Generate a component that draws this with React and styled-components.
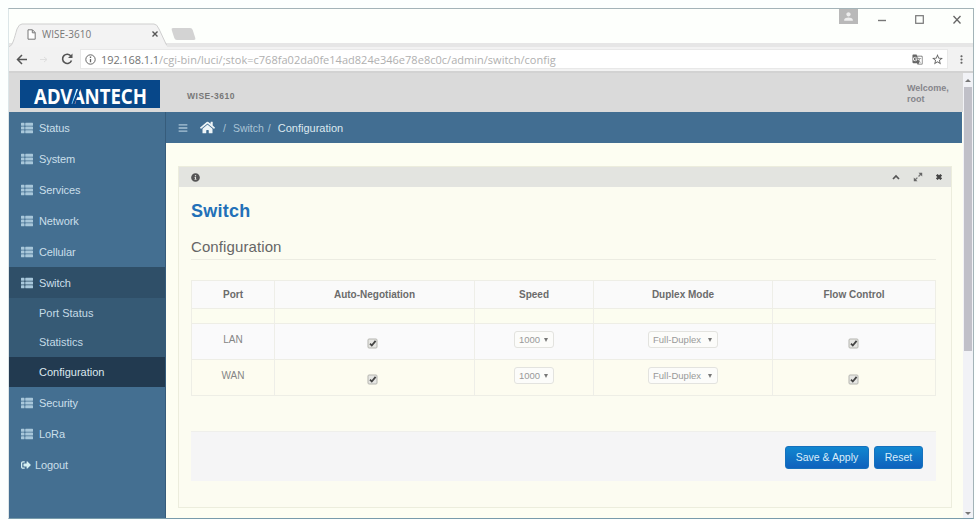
import React from 'react';
import styled, { createGlobalStyle } from 'styled-components';
import { FaHome, FaThList, FaBars, FaInfoCircle, FaSignOutAlt } from 'react-icons/fa';
import { MdGTranslate, MdStarBorder, MdMoreVert, MdPerson } from 'react-icons/md';

const menu = [
    { label: 'Status' },
    { label: 'System' },
    { label: 'Services' },
    { label: 'Network' },
    { label: 'Cellular' },
    { label: 'Switch', open: true, items: ['Port Status', 'Statistics', 'Configuration'] },
    { label: 'Security' },
    { label: 'LoRa' },
];

const columns = ['Port', 'Auto-Negotiation', 'Speed', 'Duplex Mode', 'Flow Control'];
const ports = ['LAN', 'WAN'];

const Check = () => (
    <CheckBox viewBox="0 0 11 11">
        <rect x="1" y="1" width="9" height="9" rx="1" fill="#e6e6e3" stroke="#b5b5b0" />
        <path d="M3 5.6 L4.8 7.5 L8.6 2.9" fill="none" stroke="#444" strokeWidth="1.8" />
    </CheckBox>
);

const Logo = () => (
    <LogoBox viewBox="0 0 140 28">
        <rect width="140" height="28" fill="#074789" />
        <text x="14" y="24" textLength="113" lengthAdjust="spacingAndGlyphs">ADVANTECH</text>
        <path d="M53.2 24.5 L60 7" stroke="#074789" strokeWidth="2.2" fill="none" />
    </LogoBox>
);

const Browser = () => (
    <>
        <TabStrip>
            <Tab>
                <svg className="shape" width="158" height="24" viewBox="0 0 158 24">
                    <path d="M0 24 C4 22 5 16 8 6 Q10 1 13 1 H145 Q148 1 150 6 L157 21 Q158 23 160 24" fill="#f3f3f3" stroke="#cfcfcf" />
                </svg>
                <svg className="page" width="9" height="11" viewBox="0 0 9 11">
                    <path d="M1 .8 H5.5 L8.2 3.5 V10.2 H1 Z M5.3 1 V3.8 H8" fill="#fff" stroke="#777" />
                </svg>
                <span>WISE-3610</span>
                <svg className="close" width="6" height="6" viewBox="0 0 6 6">
                    <path d="M.5 .5 L5.5 5.5 M5.5 .5 L.5 5.5" stroke="#555" strokeWidth="1.4" />
                </svg>
            </Tab>
            <NewTab />
            <WindowButtons>
                <User><MdPerson /></User>
                <svg width="8" height="20" viewBox="0 0 8 20"><path d="M0 11.5 H8" stroke="#777" strokeWidth="1.4" /></svg>
                <svg width="9" height="20" viewBox="0 0 9 20"><rect x=".7" y="6.7" width="7.6" height="7.6" fill="none" stroke="#777" strokeWidth="1.2" /></svg>
                <svg width="8" height="20" viewBox="0 0 8 20"><path d="M.5 7 L7.5 14.5 M7.5 7 L.5 14.5" stroke="#666" strokeWidth="1.3" /></svg>
            </WindowButtons>
        </TabStrip>
        <Toolbar>
            <svg width="12" height="11" viewBox="0 0 12 11"><path d="M11 5.5 H1.5 M6 1 L1.5 5.5 L6 10" stroke="#555" strokeWidth="1.5" fill="none" /></svg>
            <svg width="9" height="11" viewBox="0 0 9 11"><path d="M0 5.5 H7 M4 3 L7 5.5 L4 8" stroke="#dedede" fill="none" /></svg>
            <svg width="12" height="12" viewBox="0 0 12 12"><path d="M10 3.2 A4.6 4.6 0 1 0 10.5 7.5" stroke="#555" strokeWidth="1.6" fill="none" /><path d="M11.5 .5 V5 H7 Z" fill="#555" /></svg>
            <Address>
                <svg width="11" height="11" viewBox="0 0 11 11"><circle cx="5.5" cy="5.5" r="4.7" fill="none" stroke="#666" /><path d="M5.5 5 V8.3 M5.5 2.6 V4" stroke="#666" strokeWidth="1.3" /></svg>
                <Url><b>192.168.1.1</b>/cgi-bin/luci/;stok=c768fa02da0fe14ad824e346e78e8c0c/admin/switch/config</Url>
                <MdGTranslate size={11} />
                <MdStarBorder size={13} />
            </Address>
            <MdMoreVert className="more" size={13} />
        </Toolbar>
    </>
);

const Sidebar = () => (
    <SidebarStyled>
        {menu.map(({ label, open, items }) => (
            <React.Fragment key={label}>
                <MenuItem $open={open}><FaThList />{label}</MenuItem>
                {items && items.map((item) => (
                    <SubItem key={item} $active={item === 'Configuration'}>{item}</SubItem>
                ))}
            </React.Fragment>
        ))}
        <MenuItem $logout><FaSignOutAlt />Logout</MenuItem>
    </SidebarStyled>
);

const SwitchPanel = () => (
    <Panel>
        <PanelHeader>
            <FaInfoCircle size={9} />
            <svg width="8" height="8" viewBox="0 0 8 8"><path d="M1 6 L4 3 L7 6" stroke="#555" strokeWidth="1.7" fill="none" /></svg>
            <svg width="10" height="10" viewBox="0 0 10 10"><path d="M2 8 L8 2" stroke="#777" strokeWidth="1.3" strokeDasharray="3.4 1.6" /><path d="M5.5 .8 H9.2 V4.5 Z M.8 5.5 V9.2 H4.5 Z" fill="#666" /></svg>
            <svg width="6" height="6" viewBox="0 0 6 6"><path d="M.8 .8 L5.2 5.2 M5.2 .8 L.8 5.2" stroke="#444" strokeWidth="2.3" /></svg>
        </PanelHeader>
        <PanelBody>
            <Title>Switch</Title>
            <Legend>Configuration</Legend>
            <Table>
                <TableRow $kind="head">
                    {columns.map((name) => <Cell key={name}>{name}</Cell>)}
                </TableRow>
                <TableRow $kind="gap">
                    {columns.map((name) => <Cell key={name} />)}
                </TableRow>
                {ports.map((port) => (
                    <TableRow key={port} $kind={port === 'LAN' ? 'odd' : 'even'}>
                        <Cell>{port}</Cell>
                        <Cell $low><Check /></Cell>
                        <Cell><Select $width={40}>1000<i /></Select></Cell>
                        <Cell><Select $width={70}>Full-Duplex<i /></Select></Cell>
                        <Cell $low><Check /></Cell>
                    </TableRow>
                ))}
            </Table>
            <Actions>
                <Button $width={84}>Save &amp; Apply</Button>
                <Button $width={49}>Reset</Button>
            </Actions>
        </PanelBody>
    </Panel>
);

const App = () => (
    <>
        <GlobalStyle />
        <Window>
            <Browser />
            <Viewport>
                <Page>
                    <PageHeader>
                        <Logo />
                        <Model>WISE-3610</Model>
                        <Welcome>Welcome,<br />root</Welcome>
                    </PageHeader>
                    <Main>
                        <Sidebar />
                        <Content>
                            <Breadcrumb>
                                <FaBars size={10} />
                                <FaHome className="home" size={15} />
                                <span>/</span>
                                <span className="parent">Switch</span>
                                <span>/</span>
                                <strong>Configuration</strong>
                            </Breadcrumb>
                            <SwitchPanel />
                        </Content>
                    </Main>
                </Page>
                <Scrollbar>
                    <Arrow $up />
                    <Thumb />
                    <Arrow />
                </Scrollbar>
            </Viewport>
        </Window>
    </>
);

const GlobalStyle = createGlobalStyle`
    *{
        box-sizing:border-box;
    }

    body{
        margin:0;
        background:#fcfffe;
        font-family:"Liberation Sans", Arial, sans-serif;
    }

    svg{
        display:block;
        flex-shrink:0;
    }
`;

const Window = styled.div`
    display:flex;
    flex-direction:column;
    width:966px;
    height:511px;
    margin:8px 0 0 8px;
    border:1px solid #a3b3b8;
    border-left-color:#dce6e8;
    border-bottom-color:#789bab;
    background:#fdfffc;
`;

const TabStrip = styled.div`
    display:flex;
    height:38px;
    padding-top:14px;
    border-bottom:4px solid #e6e6e6;
`;

const Tab = styled.div`
    position:relative;
    display:flex;
    align-items:center;
    width:158px;
    height:22px;
    padding-left:18px;
    color:#777;
    font-family:"Open Sans", sans-serif;
    font-size:10px;

    .shape{
        position:absolute;
        left:0;
        top:0;
    }

    .page, span, .close{
        position:relative;
    }

    span{
        width:101px;
        margin-left:6px;
    }

    .close{
        margin-left:9px;
    }
`;

const NewTab = styled.div`
    width:21px;
    height:12px;
    margin:5px 0 0 6px;
    border-radius:2px;
    background:#d3d3d3;
    transform:skewX(18deg);
`;

const WindowButtons = styled.div`
    display:flex;
    gap:29px;
    margin:-14px 12px 0 auto;
`;

const User = styled.div`
    display:flex;
    align-items:center;
    justify-content:center;
    width:19px;
    height:15px;
    margin-right:-9px;
    background:#b9b9b9;
    color:#eee;
    font-size:13px;
`;

const Toolbar = styled.div`
    display:flex;
    align-items:center;
    height:26px;
    padding:0 5px 0 7px;
    background:#f2f2f2;
    border-bottom:2px solid #d2d2d2;
    gap:12px;
    color:#666;

    .more{
        margin-left:-5px;
    }
`;

const Address = styled.div`
    display:flex;
    flex:1;
    align-items:center;
    gap:8px;
    height:20px;
    margin-left:-5px;
    padding:0 3px 0 4px;
    background:#fff;
    border:1px solid #e8e8e8;
`;

const Url = styled.div`
    flex:1;
    margin-left:-3px;
    color:#b0b0b0;
    font-family:"Open Sans", sans-serif;
    font-size:11px;
    letter-spacing:0.02px;
    white-space:nowrap;

    b{
        color:#737373;
        font-weight:400;
        letter-spacing:-0.1px;
    }
`;

const Viewport = styled.div`
    display:flex;
    flex:1;
    min-height:0;
`;

const Page = styled.div`
    display:flex;
    flex-direction:column;
    width:954px;
`;

const PageHeader = styled.div`
    display:flex;
    height:39px;
    padding:7px 8px 0 11px;
    background:#dadada;
`;

const LogoBox = styled.svg`
    width:140px;
    height:28px;
    overflow:visible;

    text{
        fill:#fff;
        font-family:"Noto Sans", sans-serif;
        font-size:21.5px;
        font-weight:700;
    }
`;

const Model = styled.div`
    margin:11px 0 0 27px;
    color:#777;
    font-size:8.5px;
    font-weight:700;
    letter-spacing:0.5px;
`;

const Welcome = styled.div`
    width:48px;
    margin:3px 0 0 auto;
    color:#85858b;
    font-size:9px;
    font-weight:700;
    line-height:10.5px;
`;

const Main = styled.div`
    display:flex;
    flex:1;
`;

const SidebarStyled = styled.div`
    width:157px;
    background:#446f91;
    border-right:1px solid #365c7b;
`;

const MenuItem = styled.div`
    display:flex;
    align-items:center;
    gap:${({ $logout }) => ($logout ? '4px' : '6px')};
    height:31px;
    padding-left:12px;
    background:${({ $open }) => ($open ? '#2f4f68' : 'none')};
    color:#cbdfea;
    font-size:11px;
    letter-spacing:-0.1px;

    svg{
        width:${({ $logout }) => ($logout ? '10px' : '12px')};
        height:${({ $logout }) => ($logout ? '10px' : '12px')};
        color:${({ $logout }) => ($logout ? '#d6f0f2' : '#a8c7da')};
    }
`;

const SubItem = styled.div`
    display:flex;
    align-items:center;
    height:${({ $active }) => ($active ? '30px' : '29.5px')};
    padding-left:30px;
    background:${({ $active }) => ($active ? '#223a50' : '#365a75')};
    color:${({ $active }) => ($active ? '#dce8ee' : '#c5dae6')};
    font-size:11px;
`;

const Content = styled.div`
    flex:1;
    padding-right:2px;
    background:#fdfef2;
`;

const Breadcrumb = styled.div`
    display:flex;
    align-items:center;
    height:31px;
    margin-right:-1px;
    padding-left:12px;
    background:#426e92;
    color:#a9c4d6;
    font-size:10.5px;

    .home{
        margin:0 8px 0 12px;
        color:#eef5f8;
    }

    .parent{
        margin:0 4px 0 7px;
    }

    strong{
        margin-left:7px;
        color:#dde9f0;
        font-size:11px;
        font-weight:400;
    }
`;

const Panel = styled.div`
    width:774px;
    height:342px;
    margin:23px 0 0 12px;
    border:1px solid #eceddd;
    background:#fcfcf1;
`;

const PanelHeader = styled.div`
    display:flex;
    align-items:center;
    height:20px;
    padding:0 9px 0 12px;
    background:#e3e4e0;
    color:#555;
    gap:13px;

    svg:first-child{
        margin-right:auto;
    }
`;

const PanelBody = styled.div`
    padding:14px 15px 0 12px;
`;

const Title = styled.h2`
    margin:0;
    color:#2270b8;
    font-size:18px;
    line-height:21px;
    letter-spacing:0.25px;
`;

const Legend = styled.div`
    height:35px;
    margin-top:3px;
    padding-top:13px;
    border-bottom:1px solid #ecece2;
    color:#666;
    font-size:15px;
    line-height:18px;
    letter-spacing:0.1px;
`;

const Table = styled.div`
    margin-top:20px;
    border:1px solid #eeeee6;
    border-bottom:none;
`;

const heights = { head: 28, gap: 15, odd: 36, even: 36 };
const fills = { head: '#fafafa', gap: '#fcfdf0', odd: '#fafafb', even: '#fdfcf0' };

const Cell = styled.div`
    display:flex;
    align-items:center;
    justify-content:center;
    padding-top:${({ $low }) => ($low ? '4px' : '0')};
    padding-bottom:${({ $low }) => ($low ? '0' : '4px')};
    border-right:1px solid #eeeee8;

    &:last-child{
        border-right:none;
    }
`;

const TableRow = styled.div`
    display:grid;
    grid-template-columns:83px 200px 119px 179px 1fr;
    height:${({ $kind }) => heights[$kind]}px;
    background:${({ $kind }) => fills[$kind]};
    border-bottom:1px solid #eeeee6;
    color:${({ $kind }) => ($kind === 'head' ? '#6b6b6b' : '#858585')};
    font-size:10px;
    font-weight:${({ $kind }) => ($kind === 'head' ? 700 : 400)};

    ${Cell}{
        ${({ $kind }) => $kind === 'head' && 'padding-bottom:0;'}
    }
`;

const CheckBox = styled.svg`
    width:11px;
    height:11px;
    margin-right:4px;

    ${Cell}:last-child &{
        margin-right:2px;
    }
`;

const Select = styled.div`
    display:flex;
    align-items:center;
    justify-content:space-between;
    width:${({ $width }) => $width}px;
    height:17px;
    padding:0 5px 0 4px;
    background:#fcfcfa;
    border:1px solid #e3e3df;
    border-radius:3px;
    color:#999;
    font-size:9.5px;

    i{
        border:2px solid transparent;
        border-top:4px solid #777;
        border-bottom:none;
    }
`;

const Actions = styled.div`
    display:flex;
    justify-content:flex-end;
    align-items:flex-start;
    gap:5px;
    height:50px;
    margin-top:35px;
    padding:14px 13px 0 0;
    background:#f5f5f6;
    border-top:1px solid #efefeb;
`;

const Button = styled.button`
    width:${({ $width }) => $width}px;
    height:23px;
    padding:0 0 2px;
    background:linear-gradient(#1187d0, #0f61bd);
    border:1px solid #1671bd;
    border-radius:3px;
    color:#d9eefa;
    font-family:inherit;
    font-size:10.5px;
`;

const Scrollbar = styled.div`
    display:flex;
    flex-direction:column;
    flex:1;
    align-items:center;
    background:#f1f2f6;
`;

const Arrow = styled.div`
    margin:${({ $up }) => ($up ? '6px 0 5px' : 'auto 0 3px')};
    border:3px solid transparent;
    border-${({ $up }) => ($up ? 'bottom' : 'top')}:3px solid #777;
    border-${({ $up }) => ($up ? 'top' : 'bottom')}:none;
`;

const Thumb = styled.div`
    width:8px;
    height:264px;
    background:#c0c0c8;
`;

export default App;
